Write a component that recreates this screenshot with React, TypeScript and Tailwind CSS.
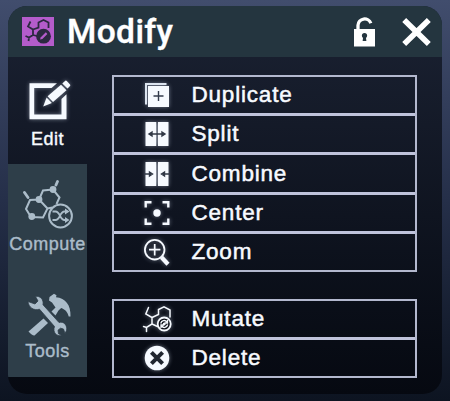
import type { ReactNode } from "react";

const glow = "overflow-visible [filter:drop-shadow(0_0_2px_rgba(225,235,255,0.45))]";

function ModifyLogo() {
  return (
    <svg className="h-[29px] w-8 bg-[#b45ccb] text-[#2b2940]" viewBox="0 0 32 29">
      <path d="M8.500 4.500 6 9.500 11 12.500V18L7 20.500 3.500 19M7 20.500 6.500 24M11 18l4 1M11 12.500l5.500-2V5.500l5-2.500 5 2.500V11" fill="none" stroke="currentColor" strokeWidth="1.800" />
      <circle cx="21.500" cy="19.200" r="7.400" fill="currentColor" />
      <path d="m18 22.500.8-2.200 5-5 1.600 1.600-5 5z" fill="#b45ccb" />
    </svg>
  );
}

function LockIcon() {
  return (
    <svg className="h-[30px] w-[21px]" viewBox="0 0 21 30">
      <path d="M4 13V8.300a6.600 6.600 0 0 1 12.800-2" fill="none" stroke="#fff" strokeWidth="3.300" />
      <path d="M0 12h21v17.500H0z" fill="#fff" />
      <circle cx="10.500" cy="18.500" r="2.600" fill="#24353f" />
      <path d="M9.300 19h2.400l.7 5H8.600z" fill="#24353f" />
    </svg>
  );
}

function CloseIcon() {
  return (
    <svg className="h-7 w-[29px]" viewBox="0 0 29 28">
      <path d="m2.200 2 24.600 24M26.800 2 2.200 26" stroke="#fff" strokeWidth="5.600" />
    </svg>
  );
}

function EditIcon() {
  return (
    <svg className={`h-10 w-[42px] ${glow}`} viewBox="0 0 42 40" fill="#f6faff">
      <path d="M.5 3.300h27.500L22.500 8H5.200v26.500h27.300V19l5-4.800v25.100H.5z" />
      <path d="M18.600 16.200 32 4.700l5.500 5.600L24 22z" />
      <path d="m17.600 17.400 5.300 5.600-8.700 3.400z" />
      <path d="m33.300 3.400 3-2.700q.8-.5 1.500.2l3.200 3.500q.7.900 0 1.500l-2.500 2.500z" />
    </svg>
  );
}

function ComputeIcon() {
  return (
    <svg className="h-[50px] w-[50px] text-[#abbcc9]" viewBox="0 0 50 50">
      <g fill="none" stroke="currentColor" strokeWidth="2">
        <path d="m1.500 12.500 3.500 5M33 5l1.500-3.500" strokeWidth="2.800" strokeLinecap="round" />
        <path d="M16 19.500 7 20 3 29l5 8 12 .5 4.500-9L16 19.500l4-9L30 9.500l6.500 8-3 6.500M24.500 28.500l5-1" />
        <circle cx="37.500" cy="36" r="11.400" />
        <path d="M29.500 31.500h3c5 0 4 8.500 9 8.500h3M29.500 40h3c5 0 4-8.500 9-8.500h3" strokeWidth="1.800" />
      </g>
      <g fill="currentColor">
        <circle cx="16" cy="19.500" r="3.400" />
        <circle cx="30" cy="9.500" r="3.400" />
        <circle cx="8.800" cy="36.500" r="3.400" />
        <path d="m42 28.500 4.500 3-4.500 3zM42 37l4.500 3-4.500 3z" />
      </g>
    </svg>
  );
}

function ToolsIcon() {
  return (
    <svg className="h-11 w-11 text-[#abbcc9]" viewBox="0 0 44 44">
      <path d="M16.500 25.500 21 30 7.500 42.500Q5.500 43 1.500 38.500z" fill="currentColor" />
      <path d="m24.500 18.500 4-4-3.500-5L22 7.500 22.500 4 27 .8l2.500 1.400-.5 2C38.500 5 44 12 43.500 23.500h-1.800c-1.200-5-4-7.300-7.500-8.500l-2.700 2.500-3 5z" fill="currentColor" />
      <path d="M1 8.500 8 11l3-3-2.500-4.500C13 2.500 17 6.500 16 11.800L32 29.500c5-1.800 8.800 3.500 7.500 8l-1.500 3-1.500-4.500-3-.8-2.500 2 .5 3.500 3.500 1.800c-6 1.200-9.500-3.500-7.500-9L12.500 16.200C7 18 1.500 14.500 1 8.500z" fill="currentColor" stroke="#2e3e49" strokeWidth=".8" />
    </svg>
  );
}

function DuplicateIcon() {
  return (
    <svg className={`size-6 ${glow}`} viewBox="0 0 24 24">
      <path d="M0 0h21.500v2H2v19.500H0z" fill="#dce4ef" />
      <path d="M3 3h21v21H3z" fill="#f6faff" />
      <path d="M13.500 8v10M8.500 13h10" stroke="#333c4d" strokeWidth="1.400" />
    </svg>
  );
}

function PanelsIcon({ inward = false }: { inward?: boolean }) {
  return (
    <svg className={`size-6 ${glow}`} viewBox="0 0 24 24">
      <path d="M.5 0h10.800v24H.5zM12.900 0h10.600v24H12.900z" fill="#f6faff" />
      <g stroke="#303846" fill="#303846" strokeWidth="1.400">
        {inward ? (
          <path d="M0 12h5M4.500 10 7.500 12l-3 2zM24 12h-5M19.500 10 16.500 12l3 2z" />
        ) : (
          <path d="M4 12h16M7 10 4 12l3 2zM17 10l3 2-3 2z" />
        )}
      </g>
    </svg>
  );
}

function CenterIcon() {
  return (
    <svg className={`size-[26px] ${glow}`} viewBox="0 0 26 26">
      <path d="M1.700 7.500V2.200H7.500M18.500 2.200h5.800v5.300M24.300 18.500v5.300H18.500M7.500 23.800H1.700v-5.300" fill="none" stroke="#f6faff" strokeWidth="2.400" />
      <circle cx="13" cy="13" r="3.700" fill="#f6faff" />
    </svg>
  );
}

function ZoomIcon() {
  return (
    <svg className={`size-[26px] ${glow}`} viewBox="0 0 26 26" fill="none" stroke="#f6faff">
      <circle cx="10.700" cy="10.700" r="9.800" strokeWidth="1.800" />
      <path d="M10.700 5v11.400M5 10.700h11.400" strokeWidth="1.700" />
      <path d="m17.500 18.300 6.500 7" strokeWidth="4.200" />
    </svg>
  );
}

function MutateIcon() {
  return (
    <svg className={`h-[27px] w-7 text-[#f6faff] ${glow}`} viewBox="0 0 28 27">
      <path d="M5.500 1.500 2.800 8 9 11.500V18L3.500 21.500 .5 20.500M3.500 21.500V25.500M9 18l5.500 2.500M9 11.500l6.500-3V3.500L21 .8l6 3.200V11" fill="none" stroke="currentColor" strokeWidth="1.500" strokeLinecap="round" />
      <circle cx="21.200" cy="18" r="6.500" fill="#0a0d16" stroke="currentColor" strokeWidth="1.800" />
      <path d="M17.700 17.500c.8-3.300 4.500-3.800 6-1.500M24.700 18.500c-.8 3.300-4.500 3.800-6 1.500M24.500 14v3h-3M18 22v-3h3" fill="none" stroke="currentColor" strokeWidth="1.400" />
      <circle cx="21.200" cy="18" r="1.500" fill="currentColor" />
    </svg>
  );
}

function DeleteIcon() {
  return (
    <svg className={`size-[26px] ${glow}`} viewBox="0 0 26 26">
      <circle cx="13" cy="13" r="12.300" fill="#f6faff" />
      <path d="m7.400 7.400 11.200 11.200M18.600 7.400 7.400 18.600" stroke="#202630" strokeWidth="4" />
    </svg>
  );
}

function Row({ icon, label, height = "h-9" }: { icon: ReactNode; label: string; height?: string }) {
  return (
    <button className={`box-content flex w-full items-center ${height}`}>
      <span className="ml-[29px] flex w-7 shrink-0 items-center justify-center">{icon}</span>
      <span className="ml-[20.5px] pt-px text-[22.5px] leading-none tracking-[0.8px] [-webkit-text-stroke:0.5px_#f7faff]">{label}</span>
    </button>
  );
}

const group = "w-[305px] divide-y-3 divide-[#bfc3db] border-2 border-[#b3b8ce]";

export default function App() {
  return (
    <div className="h-[401px] w-[450px] bg-linear-to-b from-[#414d6d] via-[#252f49] via-50% to-[#0d1421] px-2 pt-[6px] pb-[7px] font-['Liberation_Sans',Arial,sans-serif] text-[#f7faff]">
      <div className="flex h-full w-[434px] flex-col overflow-hidden rounded-[19px] bg-linear-to-b from-[#1b2233] to-[#060911]">
        <header className="flex h-[51px] shrink-0 items-center bg-[#24353f] pl-[14px]">
          <ModifyLogo />
          <h1 className="ml-[12px] w-[288px] pt-px pl-px font-[Roboto,sans-serif] text-[33.5px] leading-none font-medium tracking-[0.4px] text-white [-webkit-text-stroke:0.4px_#fff]">Modify</h1>
          <LockIcon />
          <div className="ml-[27px]"><CloseIcon /></div>
        </header>
        <div className="flex flex-1">
          <nav className="flex w-[79px] shrink-0 flex-col text-[18px] leading-[20px] tracking-[0.5px]">
            <button className="flex h-[107px] flex-col items-center pt-[23px] [-webkit-text-stroke:0.4px_#f7faff]">
              <span className="ml-[5px]"><EditIcon /></span>
              <span className="mt-[9px]">Edit</span>
            </button>
            <div className="flex h-[213px] flex-col bg-[#2e3e49] text-[#abbcc9] [-webkit-text-stroke:0.4px_#abbcc9]">
              <button className="flex h-[107px] flex-col items-center pt-[16px]">
                <ComputeIcon />
                <span className="mt-[4px]">Compute</span>
              </button>
              <button className="flex flex-1 flex-col items-center pt-[22px]">
                <span className="ml-[2px]"><ToolsIcon /></span>
                <span className="mt-[4px]">Tools</span>
              </button>
            </div>
          </nav>
          <main className="flex flex-col gap-[27px] pt-[18px] pl-[25px]">
            <div className={group}>
              <Row icon={<DuplicateIcon />} label="Duplicate" />
              <Row icon={<PanelsIcon />} label="Split" />
              <Row icon={<PanelsIcon inward />} label="Combine" height="h-[37px]" />
              <Row icon={<CenterIcon />} label="Center" />
              <Row icon={<ZoomIcon />} label="Zoom" />
            </div>
            <div className={group}>
              <Row icon={<MutateIcon />} label="Mutate" />
              <Row icon={<DeleteIcon />} label="Delete" />
            </div>
          </main>
        </div>
      </div>
    </div>
  );
}
